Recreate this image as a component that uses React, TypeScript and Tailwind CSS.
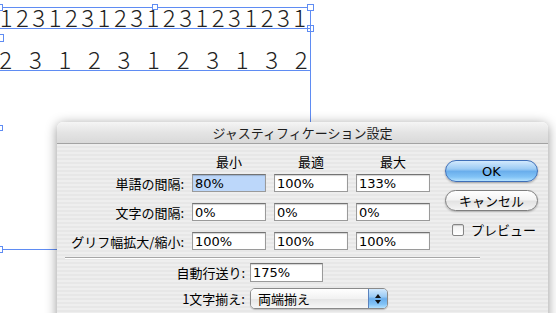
import React from "react";

const row1 = "1231231231231231231".split("");
const row2 = "23123123132".split("");

function Field({ value, selected = false, w = "w-[74px]", h = "h-[18px]" }: { value: string; selected?: boolean; w?: string; h?: string }) {
  return (
    <div
      className={`${w} ${h} border border-[#9a9a9a] border-t-[#737373] shadow-[inset_0_1px_1px_rgba(0,0,0,0.18)] ${
        selected ? "bg-[#bcd7fa]" : "bg-white"
      } flex items-center pl-[2px] text-[13px] leading-none text-black font-['DejaVu_Sans',sans-serif]`}
    >
      {value}
    </div>
  );
}

function Label({ text, w }: { text: string; w: string }) {
  return (
    <div className={`${w} text-right text-[13px] leading-none text-black font-['Noto_Sans_CJK_JP',sans-serif]`}>{text}</div>
  );
}

export default function App() {
  return (
    <div className="relative w-[556px] h-[313px] overflow-hidden bg-white">
      {/* canvas: text frame lines */}
      <div className="absolute left-0 top-[7px] w-[311px] h-px bg-[#5f8cf3]" />
      <div className="absolute left-0 top-[28px] w-[311px] h-px bg-[#5f8cf3]" />
      <div className="absolute left-0 top-[70px] w-[311px] h-px bg-[#5f8cf3]" />
      <div className="absolute left-[310px] top-[7px] w-px h-[130px] bg-[#5f8cf3]" />
      <div className="absolute left-0 top-[249px] w-[60px] h-px bg-[#5f8cf3]" />

      {/* row 1 digits */}
      <div className="absolute left-[-2px] top-[5px] w-[310px] flex text-[24px] leading-[24px] font-light text-[#222222] font-['Noto_Sans_CJK_JP',sans-serif]">
        {row1.map((c, i) => (
          <span key={i} className="flex-1 text-center">
            {c}
          </span>
        ))}
      </div>
      {/* row 2 digits */}
      <div className="absolute left-[-9px] top-[47px] w-[325px] flex text-[24px] leading-[24px] font-light text-[#222222] font-['Noto_Sans_CJK_JP',sans-serif]">
        {row2.map((c, i) => (
          <span key={i} className="flex-1 text-center">
            {c}
          </span>
        ))}
      </div>

      {/* handles */}
      <div className="absolute left-[-4px] top-[4px] w-[7px] h-[7px] border border-[#5f8cf3] bg-white" />
      <div className="absolute left-[152px] top-[4px] w-[6px] h-[6px] border border-[#5f8cf3] bg-white" />
      <div className="absolute left-[307px] top-[4px] w-[7px] h-[7px] border border-[#5f8cf3] bg-white" />
      <div className="absolute left-[307px] top-[25px] w-[7px] h-[7px] border border-[#5f8cf3]" />
      <div className="absolute left-[-4px] top-[34px] w-[8px] h-[8px] border border-[#5f8cf3] bg-white" />
      <div className="absolute left-[-4px] top-[125px] w-[7px] h-[6px] border border-[#5f8cf3] bg-white" />
      <div className="absolute left-[-4px] top-[246px] w-[7px] h-[7px] border border-[#5f8cf3] bg-white" />

      {/* dialog window */}
      <div className="absolute left-[57px] top-[122px] w-[491px] h-[205px] rounded-t-[6px] shadow-[0_2px_12px_rgba(0,0,0,0.42)] overflow-hidden flex flex-col">
        <div className="h-[22px] shrink-0 border-b border-[#a3a3a3] bg-[linear-gradient(to_bottom,#f5f5f5,#e4e4e4_50%,#d9d9d9)] flex items-center justify-center text-[13px] leading-none text-[#1e1e1e] font-['Noto_Sans_CJK_JP',sans-serif]">
          ジャスティフィケーション設定
        </div>
        <div className="flex-1 flex flex-col pt-[9px] bg-[repeating-linear-gradient(to_bottom,#eeeeee_0px,#eeeeee_2px,#e7e7e7_2px,#e7e7e7_4px)]">
          <div className="flex">
            <div className="w-[373px] flex flex-col">
              <div className="flex pl-[135px] gap-[8px] h-[16px] items-center text-[13px] leading-none text-black font-['Noto_Sans_CJK_JP',sans-serif]">
                <div className="w-[74px] text-center">最小</div>
                <div className="w-[74px] text-center">最適</div>
                <div className="w-[74px] text-center">最大</div>
              </div>
              <div className="mt-[5px] flex flex-col gap-[11px]">
                <div className="flex items-center">
                  <Label text="単語の間隔:" w="w-[127px]" />
                  <div className="ml-[8px] flex gap-[8px]">
                    <Field value="80%" selected />
                    <Field value="100%" />
                    <Field value="133%" />
                  </div>
                </div>
                <div className="flex items-center">
                  <Label text="文字の間隔:" w="w-[127px]" />
                  <div className="ml-[8px] flex gap-[8px]">
                    <Field value="0%" />
                    <Field value="0%" />
                    <Field value="0%" />
                  </div>
                </div>
                <div className="flex items-center">
                  <Label text="グリフ幅拡大/縮小:" w="w-[127px]" />
                  <div className="ml-[8px] flex gap-[8px]">
                    <Field value="100%" />
                    <Field value="100%" />
                    <Field value="100%" />
                  </div>
                </div>
              </div>
            </div>
            <div className="ml-[15px] pt-[7px] flex flex-col">
              <div className="w-[93px] h-[22px] rounded-full border border-[#3f6fb8] bg-[linear-gradient(to_bottom,#d2e9fd_0%,#9ccbf4_40%,#6aaeec_52%,#82c3f6_80%,#b4e1fe_100%)] shadow-[0_1px_2px_rgba(0,0,0,0.3)] flex items-center justify-center text-[13px] leading-none text-black font-['DejaVu_Sans',sans-serif]">
                OK
              </div>
              <div className="mt-[8px] w-[93px] h-[21px] rounded-full border border-[#7e7e7e] bg-[linear-gradient(to_bottom,#ffffff_0%,#f3f3f3_45%,#e3e3e3_55%,#f4f4f4_100%)] shadow-[0_1px_2px_rgba(0,0,0,0.25)] flex items-center justify-center text-[13px] leading-none text-black font-['Noto_Sans_CJK_JP',sans-serif]">
                キャンセル
              </div>
              <div className="mt-[12px] ml-[7px] flex items-center gap-[7px]">
                <div className="w-[12px] h-[12px] rounded-[2px] border border-[#858585] bg-[linear-gradient(to_bottom,#f0f0f0,#ffffff)] shadow-[inset_0_1px_1px_rgba(0,0,0,0.15)]" />
                <div className="text-[13px] leading-none text-black font-['Noto_Sans_CJK_JP',sans-serif]">プレビュー</div>
              </div>
            </div>
          </div>
          <div className="ml-[8px] mt-[7px] w-[415px] h-[2px] border-t border-[#a6a6a6] border-b border-b-white" />
          <div className="mt-[4px] flex items-center">
            <Label text="自動行送り:" w="w-[188px]" />
            <div className="ml-[5px]">
              <Field value="175%" w="w-[73px]" h="h-[19px]" />
            </div>
          </div>
          <div className="mt-[6px] flex items-center">
            <Label text="1文字揃え:" w="w-[188px]" />
            <div className="ml-[5px] w-[138px] h-[21px] rounded-[5px] border border-[#8a8a8a] shadow-[0_1px_1px_rgba(0,0,0,0.2)] overflow-hidden flex">
              <div className="flex-1 bg-[linear-gradient(to_bottom,#ffffff,#f2f2f2_50%,#e6e6e6_55%,#f7f7f7)] flex items-center pl-[7px] text-[13px] leading-none text-black font-['Noto_Sans_CJK_JP',sans-serif]">
                両端揃え
              </div>
              <div className="w-[19px] border-l border-[#5b82bd] bg-[linear-gradient(to_bottom,#d2e9fd_0%,#9ccbf4_40%,#6aaeec_52%,#82c3f6_80%,#b4e1fe_100%)] flex flex-col items-center justify-center gap-[2px]">
                <svg width="6" height="4" viewBox="0 0 6 4"><path d="M3 0 L6 4 L0 4 Z" fill="#111" /></svg>
                <svg width="6" height="4" viewBox="0 0 6 4"><path d="M0 0 L6 0 L3 4 Z" fill="#111" /></svg>
              </div>
            </div>
          </div>
        </div>
      </div>
    </div>
  );
}
